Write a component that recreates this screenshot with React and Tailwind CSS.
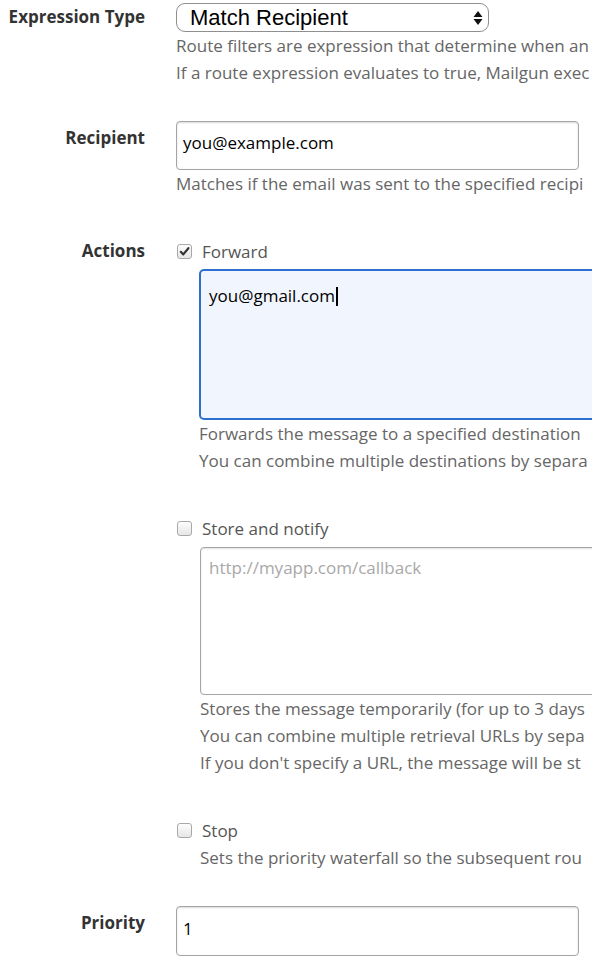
const font = { fontFamily: '"Open Sans", Lato, sans-serif' };

function Check({ checked }) {
  return (
    <span className="flex h-[15px] w-[15px] shrink-0 items-center justify-center rounded-[3px] border border-[#a9a9a9] bg-gradient-to-b from-[#fdfdfd] to-[#e6e6e6]">
      {checked && (
        <svg width="11" height="11" viewBox="0 0 11 11">
          <path d="M1.8 5.8 L4.3 8.4 L9.4 2.2" fill="none" stroke="#333" strokeWidth="2.2" strokeLinecap="round" strokeLinejoin="round" />
        </svg>
      )}
    </span>
  );
}

function Help({ lines }) {
  return (
    <div className="text-[17px] leading-[27px] text-[#666] whitespace-nowrap">
      {lines.map((l, i) => (
        <div key={i}>{l}</div>
      ))}
    </div>
  );
}

function Row({ label, labelTop = '', children, className = '' }) {
  return (
    <div className={`flex ${className}`}>
      <div className={`w-[145px] shrink-0 whitespace-nowrap text-right text-[17px] font-bold text-[#333] leading-[34px] ${labelTop}`}>{label}</div>
      <div className="ml-[31px] min-w-0 flex-1">{children}</div>
    </div>
  );
}

export default function App() {
  return (
    <div className="h-[962px] w-[592px] overflow-hidden bg-white" style={font}>
      <Row label="Expression Type">
        <div className="mt-[3px] flex h-[29px] w-[313px] items-center justify-between rounded-[9px] border border-[#8f8f8f] bg-white pl-[13px] pr-[5px]">
          <span className="text-[22px] leading-none text-black" style={{ fontFamily: '"Liberation Sans", Arial, sans-serif' }}>Match Recipient</span>
          <svg width="10" height="16" viewBox="0 0 10 16">
            <path d="M5 1 L9.5 7 L0.5 7 Z M0.5 9 L9.5 9 L5 15 Z" fill="#111" />
          </svg>
        </div>
        <Help
          lines={[
            'Route filters are expression that determine when an',
            'If a route expression evaluates to true, Mailgun exec',
          ]}
        />
      </Row>

      <Row label="Recipient" className="mt-[35px]">
        <div className="h-[49px] w-[403px] rounded-[4px] border border-[#a5a5a5] bg-white px-[6px] pt-[9px] text-[17px] leading-[24px] text-black shadow-[inset_0_1px_2px_rgba(0,0,0,0.15)]">
          you@example.com
        </div>
        <Help lines={['Matches if the email was sent to the specified recipi']} />
      </Row>

      <Row label="Actions" labelTop="-mt-[4px]" className="mt-[41px]">
        <div className="flex h-[27px] items-center gap-[10px] pl-[1px]">
          <Check checked />
          <span className="text-[17px] text-[#555]">Forward</span>
        </div>
        <div className="ml-[23px]">
          <div className="mt-[4px] h-[151px] w-[420px] rounded-[5px] border-2 border-[#2c6fce] bg-[#f1f6fe] px-[8px] pt-[12px] text-[17px] leading-[24px] text-black">
            you@gmail.com<span className="ml-[1px] inline-block h-[19px] w-[2px] translate-y-[4px] bg-black" />
          </div>
          <Help
            lines={[
              'Forwards the message to a specified destination',
              'You can combine multiple destinations by separa',
            ]}
          />
        </div>

        <div className="mt-[41px] flex h-[27px] items-center gap-[10px] pl-[1px]">
          <Check />
          <span className="text-[17px] text-[#555]">Store and notify</span>
        </div>
        <div className="ml-[24px]">
          <div className="mt-[5px] h-[148px] w-[420px] rounded-[4px] border border-[#a5a5a5] bg-white px-[8px] pt-[8px] text-[17px] leading-[24px] text-[#a8a8a8] shadow-[inset_0_1px_2px_rgba(0,0,0,0.12)]">
            http://myapp.com/callback
          </div>
          <Help
            lines={[
              'Stores the message temporarily (for up to 3 days',
              'You can combine multiple retrieval URLs by sepa',
              "If you don't specify a URL, the message will be st",
            ]}
          />
        </div>

        <div className="mt-[41px] flex h-[27px] items-center gap-[10px] pl-[1px]">
          <Check />
          <span className="text-[17px] text-[#555]">Stop</span>
        </div>
        <div className="ml-[24px]">
          <Help lines={['Sets the priority waterfall so the subsequent rou']} />
        </div>
      </Row>

      <Row label="Priority" className="mt-[35px]">
        <div className="h-[50px] w-[403px] rounded-[4px] border border-[#a5a5a5] bg-white px-[6px] pt-[10px] text-[17px] leading-[24px] text-black shadow-[inset_0_1px_2px_rgba(0,0,0,0.15)]">
          1
        </div>
        <Help lines={['Routes are evaluated in the order of priority']} />
      </Row>
    </div>
  );
}
